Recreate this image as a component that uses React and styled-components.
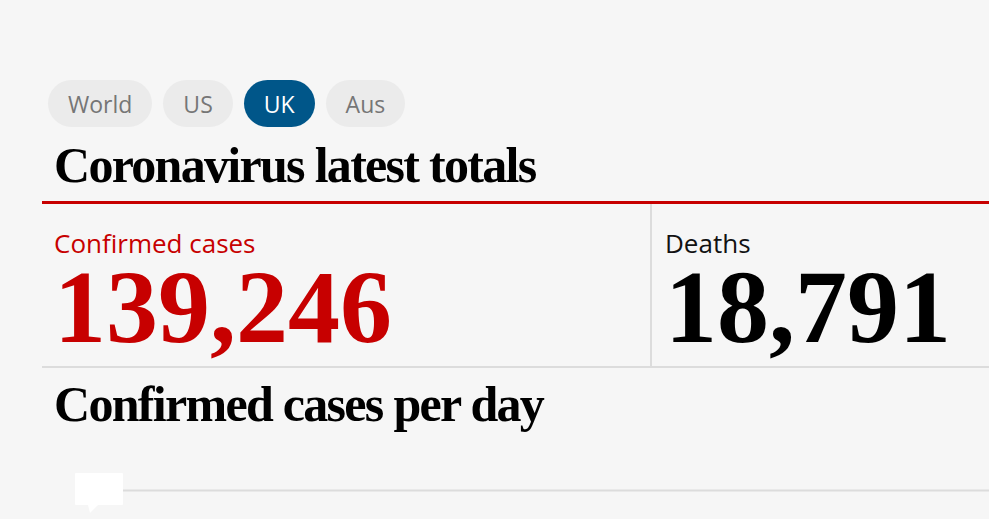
import styled, { createGlobalStyle } from "styled-components";

const GlobalStyle = createGlobalStyle`
  body {
    margin: 0;
    background: #f6f6f6;
    overflow: hidden;
  }
`;

const regions = ["World", "US", "UK", "Aus"];

export default function App() {
  return (
    <Page>
      <GlobalStyle />
      <Tabs>
        {regions.map((r) => (
          <Pill key={r} $active={r === "UK"}>
            {r}
          </Pill>
        ))}
      </Tabs>
      <Heading $rule>Coronavirus latest totals</Heading>
      <Stats>
        <Stat>
          <Label $red>Confirmed cases</Label>
          <Figure $red>139,246</Figure>
        </Stat>
        <Stat $divider>
          <Label>Deaths</Label>
          <Figure>18,791</Figure>
        </Stat>
      </Stats>
      <Heading>Confirmed cases per day</Heading>
      <Chart>
        <svg width="100%" height="79">
          <line x1="33" y1="50.5" x2="1000" y2="50.5" stroke="#dcdcdc" strokeWidth="2" />
          <path d="M34 33 H80 Q81 33 81 34 V64 Q81 65 80 65 H56 L48 73 L46 65 H34 Q33 65 33 64 V34 Q33 33 34 33 Z" fill="#ffffff" />
        </svg>
      </Chart>
    </Page>
  );
}

const Page = styled.main`
  padding: 80px 0 0 42px;
`;

const Tabs = styled.nav`
  display: flex;
  gap: 11px;
  margin-left: 6px;
`;

const Pill = styled.button`
  height: 47px;
  padding: 0 20px;
  border: none;
  border-radius: 24px;
  font-family: "Open Sans", sans-serif;
  font-size: 23px;
  color: ${(p) => (p.$active ? "#ffffff" : "#767676")};
  background: ${(p) => (p.$active ? "#005689" : "#ebebeb")};
`;

const Heading = styled.h2`
  margin: ${(p) => (p.$rule ? "11px 0 0" : "9px 0 0")};
  padding: ${(p) => (p.$rule ? "0 0 8px 12px" : "0 0 0 12px")};
  border-bottom: ${(p) => (p.$rule ? "3px solid #c70000" : "none")};
  font-family: "Liberation Serif", serif;
  font-weight: 700;
  font-size: 50px;
  line-height: 55px;
  letter-spacing: -1.7px;
  color: #000;
`;

const Stats = styled.section`
  display: grid;
  grid-template-columns: 608px 1fr;
  border-bottom: 2px solid #dcdcdc;
`;

const Stat = styled.div`
  padding: 24px 0 11px ${(p) => (p.$divider ? "13px" : "12px")};
  border-left: ${(p) => (p.$divider ? "2px solid #dcdcdc" : "none")};
`;

const Label = styled.div`
  font-family: "Open Sans", sans-serif;
  font-size: 26px;
  line-height: 30px;
  color: ${(p) => (p.$red ? "#c70000" : "#121212")};
`;

const Figure = styled.div`
  margin-top: 1px;
  font-family: "Liberation Serif", serif;
  font-weight: 700;
  font-size: 104px;
  line-height: 96px;
  color: ${(p) => (p.$red ? "#c70000" : "#000")};
`;

const Chart = styled.div`
  margin-top: 8px;
`;
